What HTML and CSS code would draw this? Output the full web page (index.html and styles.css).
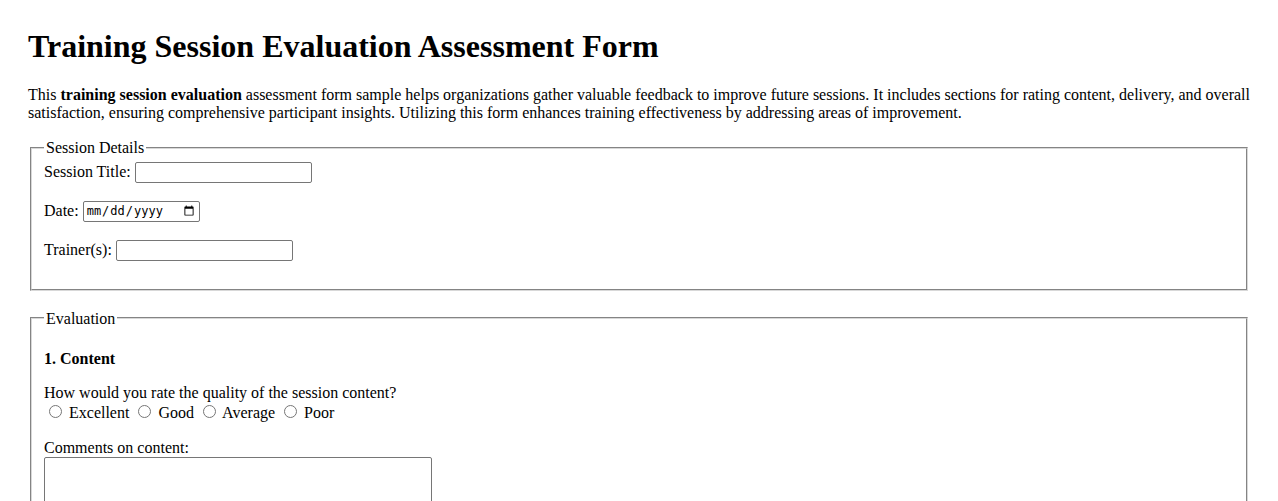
FILE: index.html
```html
<!DOCTYPE html>
<html lang="en">
<head>
  <meta charset="UTF-8">
  <meta name="viewport" content="width=device-width, initial-scale=1.0">
  <title>Training Session Evaluation Assessment Form</title>
  <link rel="stylesheet" href="styles.css">
</head>
<body>
  <h1>Training Session Evaluation Assessment Form</h1>

  <p>This <strong>training session evaluation</strong> assessment form sample helps organizations gather valuable feedback to improve future sessions. It includes sections for rating content, delivery, and overall satisfaction, ensuring comprehensive participant insights. Utilizing this form enhances training effectiveness by addressing areas of improvement.</p>

  <form>
    <fieldset>
      <legend>Session Details</legend>
      <div class="row">
        <label for="title">Session Title:</label>
        <input type="text" id="title" class="field">
      </div>
      <div class="row">
        <label for="date">Date:</label>
        <input type="date" id="date" class="date">
      </div>
      <div class="row">
        <label for="trainer">Trainer(s):</label>
        <input type="text" id="trainer" class="field">
      </div>
    </fieldset>

    <fieldset>
      <legend>Evaluation</legend>
      <h3 class="section">1. Content</h3>
      <p class="question">How would you rate the quality of the session content?<br>
        <input type="radio" name="content" id="c1"> <label for="c1">Excellent</label>
        <input type="radio" name="content" id="c2"> <label for="c2">Good</label>
        <input type="radio" name="content" id="c3"> <label for="c3">Average</label>
        <input type="radio" name="content" id="c4"> <label for="c4">Poor</label>
      </p>
      <p>Comments on content:<br>
        <textarea class="comments" rows="4"></textarea>
      </p>
    </fieldset>
  </form>
</body>
</html>
```

FILE: styles.css
```css
body {
  font-family: "Liberation Serif", "Times New Roman", serif;
  font-size: 16px;
  color: #000;
  background: #fff;
  padding: 20px;
}
h1 {
  margin-top: 0;
  font-size: 32px;
}
fieldset {
  margin: 0 2px 18px;
  padding-top: 4.5px;
  border: 2px groove #d8d8d8;
}
legend {
  padding: 1px 2px 0;
}
.row {
  margin-bottom: 18px;
}
.field {
  box-sizing: border-box;
  width: 177px;
  height: 21px;
  border: 1px solid #767676;
  border-radius: 2px;
}
.date {
  box-sizing: border-box;
  width: 117px;
  height: 21px;
  font-family: "DejaVu Sans Mono", monospace;
  font-size: 12px;
  border: 1px solid #767676;
  border-radius: 2px;
  padding: 1px 2px;
}
.section {
  font-size: 16px;
  margin: 18px 0 15px;
}
.question {
  margin-bottom: 17px;
}
.comments {
  box-sizing: border-box;
  width: 388px;
  height: 70px;
  border: 1px solid #767676;
  border-radius: 2px;
}
```
